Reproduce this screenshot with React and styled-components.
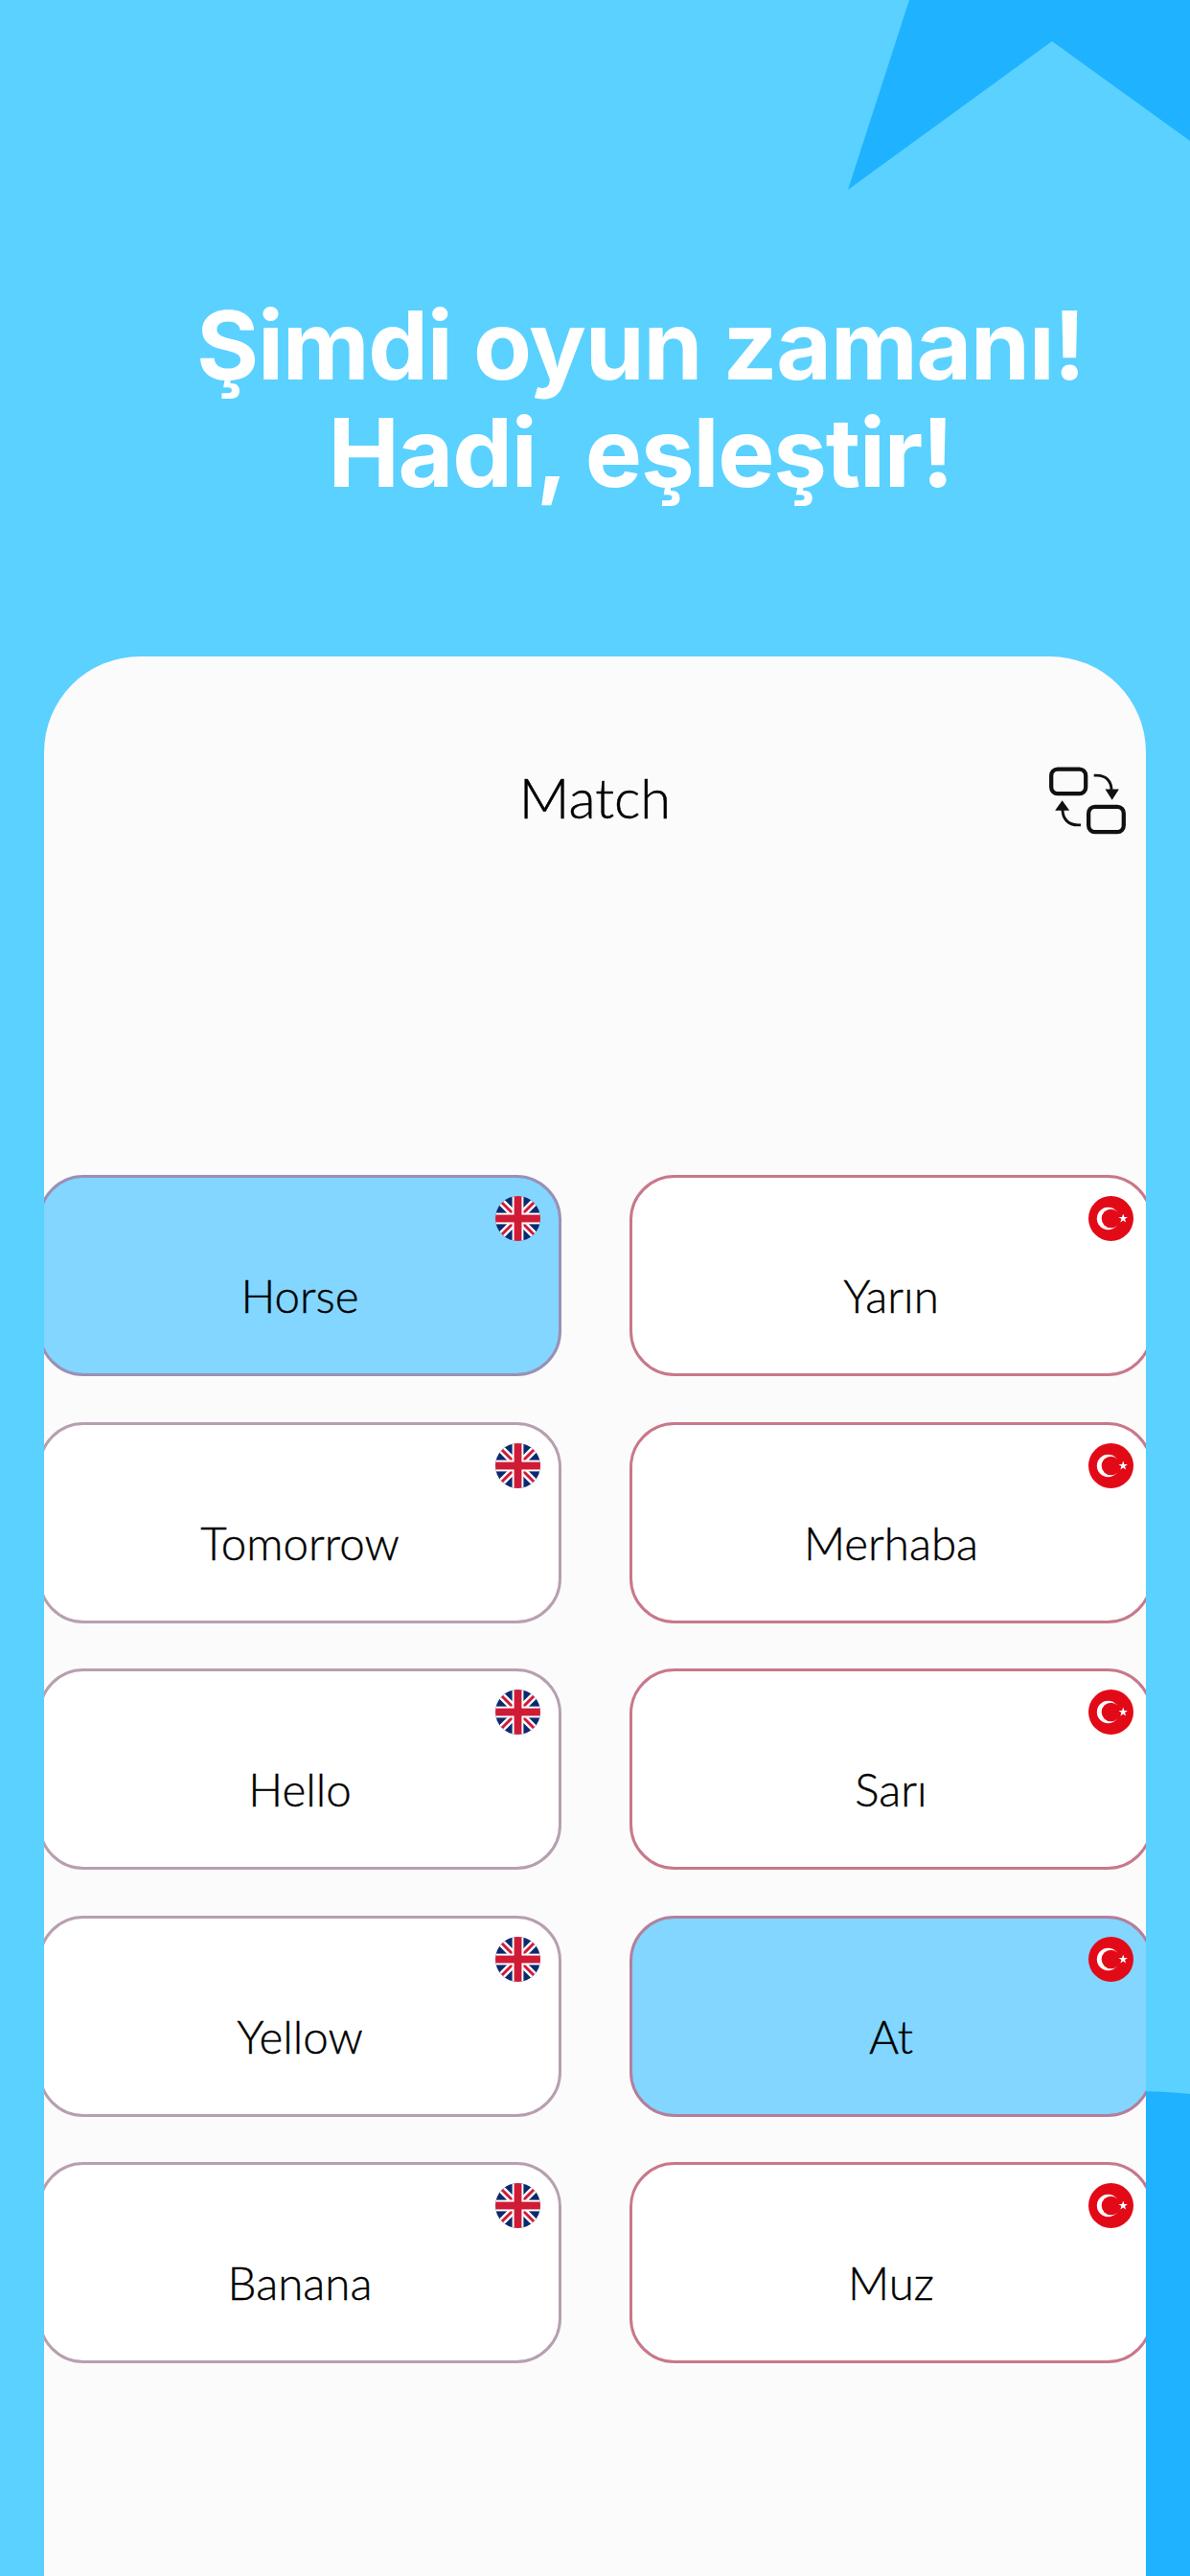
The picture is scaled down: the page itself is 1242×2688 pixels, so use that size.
import React, { useId } from "react";
import styled, { createGlobalStyle } from "styled-components";

const Global = createGlobalStyle`
  html, body { margin: 0; padding: 0; background: #5ad1ff; }
  #root { width: 1242px; height: 2688px; overflow: hidden; }
`;

const Page = styled.div`
  position: relative;
  width: 1242px;
  height: 2688px;
  overflow: hidden;
  background: #5ad1ff;
  display: flex;
  flex-direction: column;
`;

const Backdrop = styled.svg`
  position: absolute;
  inset: 0;
  width: 1242px;
  height: 2688px;
`;

const Heading = styled.h1`
  position: relative;
  box-sizing: border-box;
  height: 685px;
  margin: 0;
  padding: 304px 0 0 95px;
  font-family: Inter, "Liberation Sans", sans-serif;
  font-weight: 700;
  font-size: 99.5px;
  line-height: 112px;
  letter-spacing: -1.2px;
  color: #fff;
  text-align: center;
`;

const Panel = styled.section`
  position: relative;
  flex: 1;
  margin: 0 46px;
  background: #fbfbfb;
  border-radius: 100px 100px 0 0;
  overflow: hidden;
`;

const PanelHeader = styled.header`
  height: 294px;
  display: grid;
  grid-template-columns: 1fr auto 1fr;
  align-items: center;
  padding: 0 19px;
`;

const PanelTitle = styled.h2`
  grid-column: 2;
  margin: -2px 0 0;
  font-family: Lato, "Open Sans", sans-serif;
  font-weight: 300;
  font-size: 58px;
  color: #000;
  -webkit-text-stroke: 0.5px #000;
`;

const SwapIcon = styled.svg`
  grid-column: 3;
  justify-self: end;
  width: 84px;
  height: 72px;
  margin-top: 6px;
`;

const CardGrid = styled.div`
  display: grid;
  grid-template-columns: 546px 546px;
  column-gap: 71px;
  row-gap: 47.5px;
  margin: 247px 0 0 -6px;
`;

const Card = styled.div`
  position: relative;
  box-sizing: border-box;
  height: 210px;
  display: flex;
  align-items: center;
  justify-content: center;
  padding-top: 41px;
  border: 3px solid ${(p) => p.$edge};
  border-radius: 47px;
  background: ${(p) => (p.$selected ? "#82d6ff" : "#fff")};
`;

const CardLabel = styled.span`
  font-family: Lato, "Open Sans", sans-serif;
  font-weight: 300;
  font-size: 47.5px;
  color: #000;
  -webkit-text-stroke: 0.4px #000;
`;

const FlagBadge = styled.svg`
  position: absolute;
  top: 19px;
  right: ${(p) => p.$inset}px;
  width: 47px;
  height: 47px;
`;

function UkFlag() {
  const id = useId();
  return (
    <FlagBadge $inset={19} viewBox="0 0 48 48">
      <defs>
        <clipPath id={id}>
          <circle cx="24" cy="24" r="24" />
        </clipPath>
      </defs>
      <g clipPath={`url(#${id})`}>
        <rect width="48" height="48" fill="#0b2a6e" />
        <path d="M2 2 L46 46 M46 2 L2 46" stroke="#fff" strokeWidth="8" />
        <path d="M2 2 L46 46 M46 2 L2 46" stroke="#cf1b36" strokeWidth="3" />
        <rect x="18" width="12" height="48" fill="#fff" />
        <rect y="18" width="48" height="12" fill="#fff" />
        <rect x="20" width="8" height="48" fill="#cf1b36" />
        <rect y="20" width="48" height="8" fill="#cf1b36" />
      </g>
    </FlagBadge>
  );
}

function TrFlag() {
  return (
    <FlagBadge $inset={17} viewBox="0 0 48 48">
      <circle cx="24" cy="24" r="24" fill="#e30a17" />
      <circle cx="21" cy="24" r="12" fill="#fff" />
      <circle cx="24" cy="24" r="10" fill="#e30a17" />
      <polygon
        points="37,19 38.2,22.4 41.8,22.4 38.9,24.6 39.9,28 37,26 34.1,28 35.1,24.6 32.2,22.4 35.8,22.4"
        fill="#fff"
      />
    </FlagBadge>
  );
}

const rows = [
  [["Horse", true], ["Yarın", false]],
  [["Tomorrow", false], ["Merhaba", false]],
  [["Hello", false], ["Sarı", false]],
  [["Yellow", false], ["At", true]],
  [["Banana", false], ["Muz", false]],
];

export default function App() {
  return (
    <Page>
      <Global />
      <Backdrop viewBox="0 0 1242 2688">
        <polygon points="949,0 885,198 1098,43 1242,147 1242,0" fill="#1fb2ff" />
        <path d="M1180 2182 Q1215 2182 1242 2185 V2688 H1180 Z" fill="#1fb2ff" />
      </Backdrop>
      <Heading>
        Şimdi oyun zamanı!
        <br />
        Hadi, eşleştir!
      </Heading>
      <Panel>
        <PanelHeader>
          <PanelTitle>Match</PanelTitle>
          <SwapIcon viewBox="90 85 255 220" fill="none">
            <rect x="102" y="96" width="110" height="78" rx="20" stroke="#111" strokeWidth="13" />
            <rect x="221" y="216" width="112" height="80" rx="20" stroke="#111" strokeWidth="13" />
            <path d="M238 116 h10 c28 0 46 18 46 48" stroke="#111" strokeWidth="9" />
            <polygon points="274,160 318,160 296,194" fill="#111" />
            <path d="M196 274 h-10 c-28 0 -48 -18 -48 -50" stroke="#111" strokeWidth="9" />
            <polygon points="114,228 160,228 137,196" fill="#111" />
          </SwapIcon>
        </PanelHeader>
        <CardGrid>
          {rows.map(([left, right]) => (
            <React.Fragment key={left[0]}>
              <Card $selected={left[1]} $edge={left[1] ? "#9a90b5" : "#b79fb0"}>
                <CardLabel>{left[0]}</CardLabel>
                <UkFlag />
              </Card>
              <Card $selected={right[1]} $edge={right[1] ? "#b47f9c" : "#c8788a"}>
                <CardLabel>{right[0]}</CardLabel>
                <TrFlag />
              </Card>
            </React.Fragment>
          ))}
        </CardGrid>
      </Panel>
    </Page>
  );
}
